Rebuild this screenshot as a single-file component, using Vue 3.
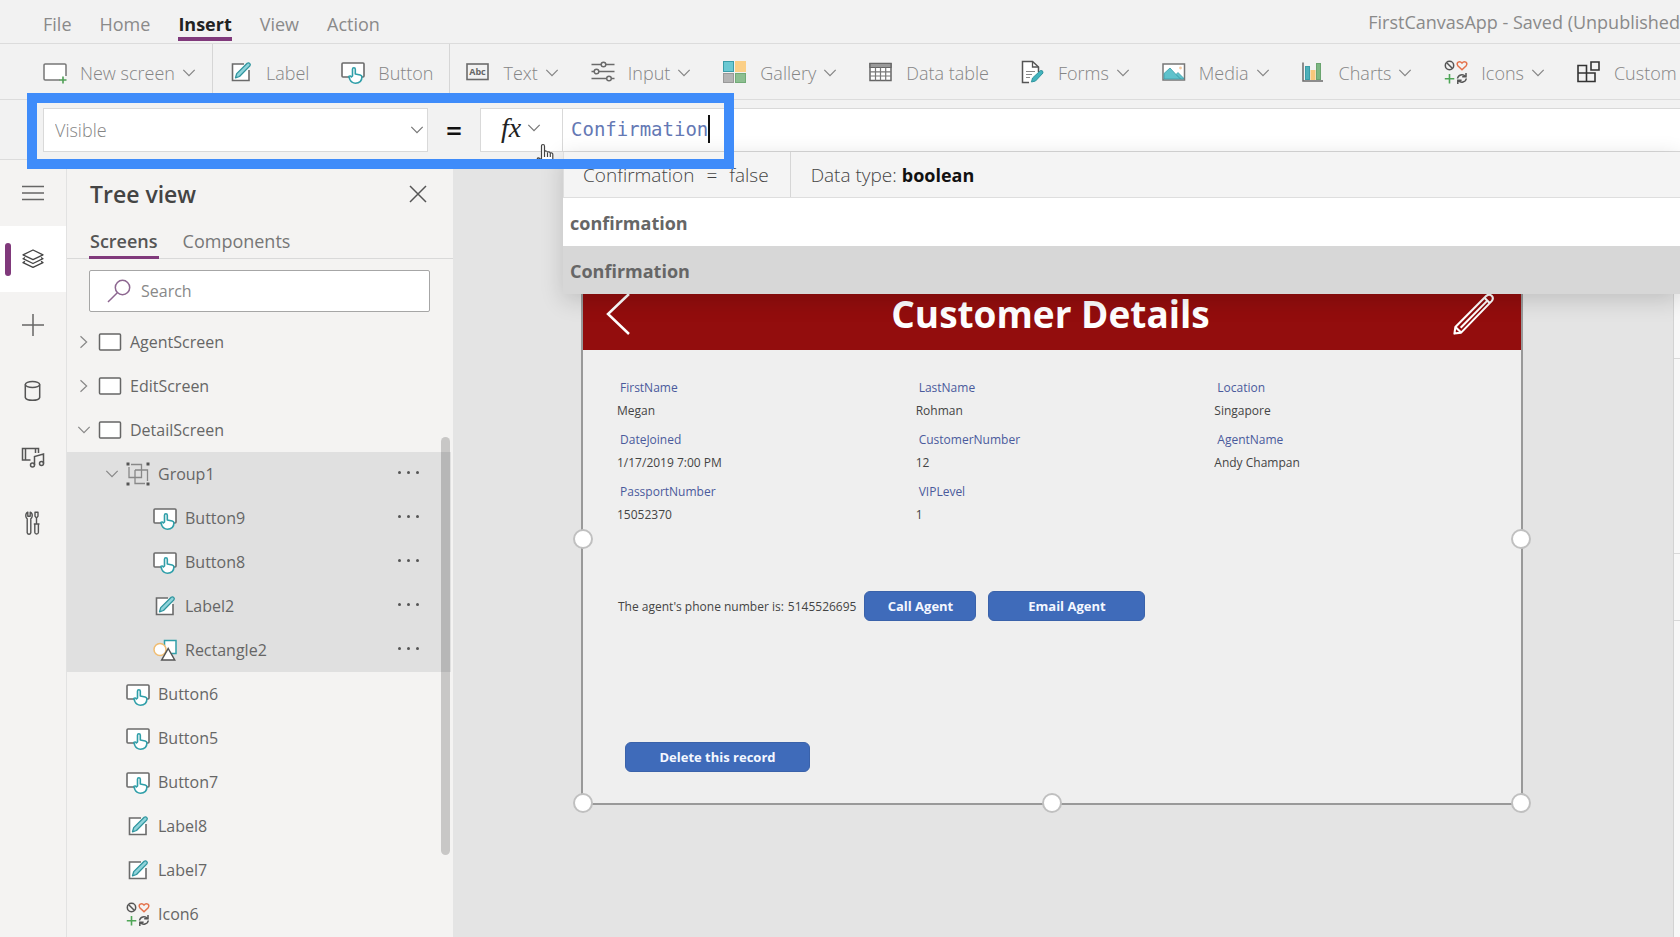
<script setup>
import { ref } from 'vue'

const menus = ['File', 'Home', 'Insert', 'View', 'Action']
const activeMenu = ref('Insert')

const tools = [
  { icon: 'newscreen', label: 'New screen', menu: true, divider: true },
  { icon: 'label', label: 'Label' },
  { icon: 'button', label: 'Button', divider: true },
  { icon: 'text', label: 'Text', menu: true },
  { icon: 'input', label: 'Input', menu: true },
  { icon: 'gallery', label: 'Gallery', menu: true },
  { icon: 'table', label: 'Data table' },
  { icon: 'forms', label: 'Forms', menu: true },
  { icon: 'media', label: 'Media', menu: true },
  { icon: 'charts', label: 'Charts', menu: true },
  { icon: 'icons', label: 'Icons', menu: true },
  { icon: 'custom', label: 'Custom' }
]

const rail = [
  { icon: 'hamburger', label: 'Menu' },
  { icon: 'layers', label: 'Tree view', active: true },
  { icon: 'plus', label: 'Insert' },
  { icon: 'data', label: 'Data' },
  { icon: 'medialib', label: 'Media' },
  { icon: 'toolset', label: 'Advanced tools' }
]

const tree = [
  { name: 'AgentScreen', icon: 'screen', level: 0, arrow: 'right' },
  { name: 'EditScreen', icon: 'screen', level: 0, arrow: 'right' },
  { name: 'DetailScreen', icon: 'screen', level: 0, arrow: 'down' },
  { name: 'Group1', icon: 'group', level: 1, arrow: 'down', selected: true },
  { name: 'Button9', icon: 'button', level: 2, selected: true },
  { name: 'Button8', icon: 'button', level: 2, selected: true },
  { name: 'Label2', icon: 'label', level: 2, selected: true },
  { name: 'Rectangle2', icon: 'shapes', level: 2, selected: true },
  { name: 'Button6', icon: 'button', level: 1 },
  { name: 'Button5', icon: 'button', level: 1 },
  { name: 'Button7', icon: 'button', level: 1 },
  { name: 'Label8', icon: 'label', level: 1 },
  { name: 'Label7', icon: 'label', level: 1 },
  { name: 'Icon6', icon: 'icons', level: 1 }
]

const fields = [
  ['FirstName', 'Megan'],
  ['LastName', 'Rohman'],
  ['Location', 'Singapore'],
  ['DateJoined', '1/17/2019 7:00 PM'],
  ['CustomerNumber', '12'],
  ['AgentName', 'Andy Champan'],
  ['PassportNumber', '15052370'],
  ['VIPLevel', '1']
]

const property = ref('Visible')
const formula = ref('Confirmation')
const search = ref('')
</script>

<template>
  <div class="studio">
    <svg class="sprite" aria-hidden="true">
      <symbol id="i-newscreen" viewBox="0 0 24 24">
        <path d="M17 20H2.2A1.2 1.2 0 0 1 1 18.800V5.200A1.200 1.200 0 0 1 2.200 4h19.600A1.200 1.200 0 0 1 23 5.200V16" fill="#fff" stroke="#777" stroke-width="1.500" />
        <path d="M20 16.500v7M16.500 20h7" stroke="#4f9f55" stroke-width="1.600" />
      </symbol>
      <symbol id="i-screen" viewBox="0 0 24 24">
        <rect x="1.500" y="4" width="21" height="16" rx="1" fill="#fff" stroke="#666" stroke-width="1.500" />
      </symbol>
      <symbol id="i-label" viewBox="0 0 24 24">
        <path d="M15 4H3.500v16.500H20V10" fill="#fff" stroke="#6b6b6b" stroke-width="1.600" />
        <path d="M6.500 17.800l1.200-4.200L18.200 3.200q1.400-.9 2.500.2t.2 2.500L10.500 16.500z" fill="#8fd3da" stroke="#2f959e" stroke-width="1.300" stroke-linejoin="round" />
      </symbol>
      <symbol id="i-button" viewBox="0 0 24 24">
        <rect x="1" y="3" width="22" height="14" rx="1" fill="#fff" stroke="#6b6b6b" stroke-width="1.600" />
        <path d="M11.500 16V9.200q0-1.500 1.400-1.500t1.400 1.500V14l4.900 1q1.700.4 1.700 2-.1 6.200-6.500 6.200-4 0-5.600-3.900l-1-2.900q1.700-1 2.600.6z" fill="#fff" stroke="#2f9fa9" stroke-width="1.600" stroke-linejoin="round" />
      </symbol>
      <symbol id="i-text" viewBox="0 0 24 24">
        <rect x="1" y="4" width="21" height="15.500" fill="none" stroke="#6b6b6b" stroke-width="1.600" />
        <text x="11.500" y="14.800" text-anchor="middle" font-size="9" font-weight="700" fill="#666" font-family="Open Sans, sans-serif">Abc</text>
      </symbol>
      <symbol id="i-input" viewBox="0 0 24 24">
        <g fill="#f2f2f2" stroke="#6b6b6b" stroke-width="1.500">
          <path d="M0.500 4.500h23M0.500 11.500h23M0.500 18.500h23" />
          <circle cx="12.500" cy="4.500" r="2.300" /><circle cx="5.500" cy="11.500" r="2.300" /><circle cx="18" cy="18.500" r="2.300" />
        </g>
      </symbol>
      <symbol id="i-gallery" viewBox="0 0 24 24">
        <rect x="0.500" y="1.500" width="10" height="10" fill="#6ac8d2" stroke="#3a9da8" />
        <rect x="12" y="1" width="11" height="11" fill="#fbcf86" />
        <rect x="0.500" y="13.500" width="10" height="9" fill="#b4b4b4" stroke="#999" />
        <rect x="12.500" y="13.500" width="10" height="9" fill="#8dbf91" stroke="#72ab77" />
      </symbol>
      <symbol id="i-table" viewBox="0 0 24 24">
        <path d="M1 3.500h21v17H1z" fill="#fff" stroke="#666" stroke-width="1.500" />
        <path d="M1 3.500h21v4H1z" fill="#999" stroke="#666" stroke-width="1.200" />
        <path d="M1 11.800h21M1 16h21M6.500 7.500v13M11.500 7.500v13M16.700 7.500v13" stroke="#777" stroke-width="1.200" />
      </symbol>
      <symbol id="i-forms" viewBox="0 0 24 24">
        <path d="M8 22.500H1.500v-21h10l6 5.500v5" fill="#fff" stroke="#555" stroke-width="1.500" />
        <path d="M11.500 1.500V7h6" fill="none" stroke="#555" stroke-width="1.300" />
        <path d="M5 11.500h9M5 14.500h6M5 17.500h4" stroke="#888" stroke-width="1.200" />
        <path d="M10.500 22l1-4L19.500 10.500q2.800-.5 2.500 2.500L14.500 21z" fill="#43b3bd" stroke="#2f959e" stroke-linejoin="round" />
      </symbol>
      <symbol id="i-media" viewBox="0 0 24 24">
        <rect x="1" y="4" width="21.500" height="16" fill="#fff" stroke="#777" stroke-width="1.500" />
        <path d="M2 19v-5.500L8 8l6 6.500 2-2 5.500 5.500v1z" fill="#5fc2cc" stroke="#3a9da8" stroke-width=".8" />
        <path d="M14 14.500l4.500 4.500" stroke="#3a9da8" /><circle cx="18.500" cy="8" r="1.400" fill="#f5c9a0" />
      </symbol>
      <symbol id="i-charts" viewBox="0 0 24 24">
        <rect x="3.500" y="6.500" width="4" height="13" fill="#4eb0ba" stroke="#3a9da8" /><rect x="8.500" y="10" width="5" height="10" fill="#f8c77a" /><rect x="14.500" y="3.500" width="4" height="16" fill="#7db782" stroke="#6aa46f" />
        <path d="M1 2.500v18.500h20" fill="none" stroke="#6b6b6b" stroke-width="1.500" />
      </symbol>
      <symbol id="i-icons" viewBox="0 0 24 24">
        <g fill="none" stroke="#555" stroke-width="1.500">
          <circle cx="5.500" cy="5.500" r="4.200" /><path d="M2.500 2.500l6 6" />
          <path d="M13.500 18.500a4.400 4.400 0 0 1 7.800-2M22.300 18.500a4.400 4.400 0 0 1-7.800 2M22 13v3.800h-3.800M13.800 24v-3.800h3.800" />
        </g>
        <path d="M18 9.800L13.800 5.700q-1.400-2.300.4-3.600 2.200-1.100 3.800 1 1.600-2.100 3.800-1 1.800 1.300.4 3.600z" fill="none" stroke="#e4734c" stroke-width="1.500" />
        <path d="M5.500 14v9.500M.8 18.700h9.500" stroke="#4fa657" stroke-width="1.600" />
      </symbol>
      <symbol id="i-custom" viewBox="0 0 24 24">
        <path d="M1 5.500h8.500V13H18v8.500H1zM1 13h8.500v8.500M14 2h8v8h-8z" fill="none" stroke="#333" stroke-width="1.600" />
      </symbol>
      <symbol id="i-group" viewBox="0 0 24 24">
        <g fill="none" stroke="#888" stroke-width="1.300">
          <path d="M5 2.500h10.500v13H3V5M9 8h12.500v11M19 21.500H9V8" />
        </g>
        <path d="M.5.500h3v3h-3zM20.500.500h3v3h-3zM.5 20.500h3v3h-3zM20.500 20.500h3v3h-3z" fill="#555" />
      </symbol>
      <symbol id="i-shapes" viewBox="0 0 24 24">
        <rect x="11.500" y="2.500" width="11.500" height="13" fill="#fff" stroke="#2f9fa9" stroke-width="1.500" />
        <circle cx="7" cy="11.500" r="6" fill="#fff" stroke="#f0bd72" stroke-width="1.500" />
        <path d="M15.200 10.500l6.500 11.500h-13z" fill="#fff" stroke="#555" stroke-width="1.500" />
      </symbol>
      <symbol id="i-hamburger" viewBox="0 0 24 24"><path d="M1 5.500h22M1 12h22M1 18.500h22" stroke="#666" stroke-width="1.500" /></symbol>
      <symbol id="i-layers" viewBox="0 0 24 24">
        <g fill="none" stroke="#444" stroke-width="1.300" stroke-linejoin="round">
          <path d="M12 3l10 4.800-10 4.800L2 7.800z" /><path d="M4 10.500L2 11.700l10 4.800 10-4.800-2-1.200" /><path d="M4 14.400l-2 1.200 10 4.800 10-4.800-2-1.200" />
        </g>
      </symbol>
      <symbol id="i-plus" viewBox="0 0 24 24"><path d="M12 1v22M1 12h22" stroke="#666" stroke-width="1.500" /></symbol>
      <symbol id="i-data" viewBox="0 0 24 24">
        <g fill="none" stroke="#555" stroke-width="1.500"><ellipse cx="11.500" cy="5.500" rx="7.200" ry="3" /><path d="M4.300 5.500v13q.8 2.800 7.200 2.800t7.200-2.800v-13" /></g>
      </symbol>
      <symbol id="i-medialib" viewBox="0 0 24 24">
        <g fill="none" stroke="#555" stroke-width="1.500">
          <path d="M9.500 15H1.500V3.500h16V8M4.500 4v11M14.500 4v4" /><path d="M13.500 20V11.500l9-2.500v9.500" />
          <ellipse cx="11.500" cy="20" rx="2" ry="2" /><ellipse cx="20.500" cy="18.500" rx="2" ry="2" />
        </g>
      </symbol>
      <symbol id="i-toolset" viewBox="0 0 24 24">
        <g fill="none" stroke="#555" stroke-width="1.400" stroke-linejoin="round">
          <path d="M6.800 1.200v4h2.400v-4q2.500 1.300 2 4Q11 7 9.800 7.800v14q-.4 1.400-1.800 1.400t-1.800-1.400v-14Q5 7 4.800 5.200q-.3-2.700 2-4z" />
          <path d="M14 1.200h3v4l-1.500 2-1.500-2zM15.500 7v6M12.800 13h5.700M13.800 13v8.500q.2 1.500 1.800 1.500t1.800-1.500V13" />
        </g>
      </symbol>
      <symbol id="i-down" viewBox="0 0 16 16"><path d="M1.500 4.500L8 11l6.500-6.500" fill="none" stroke="currentColor" stroke-width="1.400" /></symbol>
      <symbol id="i-right" viewBox="0 0 16 16"><path d="M4 1.500L11 8l-7 6.500" fill="none" stroke="currentColor" stroke-width="1.400" /></symbol>
    </svg>

    <header class="menubar">
      <nav class="menus">
        <button v-for="m in menus" :key="m" class="menu" :class="{ on: m === activeMenu }" @click="activeMenu = m">{{ m }}</button>
      </nav>
      <div class="doc">FirstCanvasApp - Saved (Unpublished</div>
    </header>

    <div class="toolbar">
      <button v-for="t in tools" :key="t.label" class="tool" :class="{ divided: t.divider }">
        <svg class="icon"><use :href="'#i-' + t.icon" /></svg>
        <span class="tool-label">{{ t.label }}</span>
        <svg v-if="t.menu" class="chev"><use href="#i-down" /></svg>
      </button>
    </div>

    <div class="formula">
      <div class="prop">
        <select v-model="property" class="prop-select" aria-label="Property">
          <option>Visible</option>
        </select>
        <svg class="chev prop-chev"><use href="#i-down" /></svg>
      </div>
      <span class="equals">=</span>
      <button class="fx" aria-label="Formula"><span class="fx-sign">fx</span><svg class="chev"><use href="#i-down" /></svg></button>
      <div class="entry">
        <input v-model="formula" class="entry-input" aria-label="Formula text" spellcheck="false" />
        <span class="caret"></span>
      </div>
      <div class="assist">
        <div class="result">
          <div class="result-value"><span>Confirmation</span><span>=</span><span>false</span></div>
          <div class="result-type">Data type: <b>boolean</b></div>
        </div>
        <button class="hint">confirmation</button>
        <button class="hint current">Confirmation</button>
      </div>
      <svg class="pointer" viewBox="0 0 18 28">
        <path d="M5.500 17V3.200Q5.500 1.500 7 1.500t1.500 1.700V9q.3-1.200 1.600-1t1.400 1.600q.4-1 1.500-.8t1.300 1.600q.6-.8 1.600-.4t.9 1.600V19q-.2 6-6 6.500-4 0-5.800-3.500L1.500 17q-.6-1.800.8-2.100 1 0 3.200 2.100zM8.500 9v5M11.500 10v4M14.300 11v3" fill="#fff" stroke="#444" stroke-width="1.200" />
      </svg>
      <div class="spotlight"></div>
    </div>

    <main class="body">
      <nav class="rail">
        <button v-for="r in rail" :key="r.label" class="rail-item" :class="{ active: r.active }" :aria-label="r.label">
          <svg class="icon"><use :href="'#i-' + r.icon" /></svg>
        </button>
      </nav>

      <aside class="panel">
        <div class="panel-head">
          <h2 class="panel-title">Tree view</h2>
          <button class="close" aria-label="Close">
            <svg class="close-icon" viewBox="0 0 18 18"><path d="M1 1l16 16M17 1L1 17" stroke="#555" stroke-width="1.500" /></svg>
          </button>
        </div>
        <div class="tabs">
          <button class="tab on">Screens</button>
          <button class="tab">Components</button>
        </div>
        <label class="search">
          <svg class="search-icon" viewBox="0 0 24 24"><circle cx="15.500" cy="8.500" r="7.200" fill="none" stroke="#8d6690" stroke-width="1.500" /><path d="M10.300 13.700L1 23" stroke="#8d6690" stroke-width="1.500" /></svg>
          <input v-model="search" class="search-input" placeholder="Search" aria-label="Search" />
        </label>
        <ul class="tree">
          <li v-for="n in tree" :key="n.name" class="node" :class="['level-' + n.level, { selected: n.selected }]">
            <svg v-if="n.arrow" class="arrow"><use :href="'#i-' + n.arrow" /></svg>
            <span v-else class="arrow"></span>
            <svg class="icon"><use :href="'#i-' + n.icon" /></svg>
            <span class="node-name">{{ n.name }}</span>
            <button v-if="n.selected" class="more" aria-label="More"><i></i><i></i><i></i></button>
          </li>
        </ul>
        <div class="thumb"></div>
      </aside>

      <section class="stage">
        <div class="artboard">
          <div class="app-head">
            <svg class="back" viewBox="0 0 24 42"><path d="M23 1L2 21l21 20" fill="none" stroke="#fff" stroke-width="2.500" /></svg>
            <h1 class="app-title">Customer Details</h1>
            <svg class="edit" viewBox="0 0 44 44"><path d="M1.500 42.500l1-7L35 3q3-2.500 5.500 0t0 5.500L8.500 41.500zM2.500 35.500l6 6M8 36.500L36 8M33 5l6 6" fill="none" stroke="#fff" stroke-width="2.200" stroke-linejoin="round" /></svg>
          </div>
          <dl class="fields">
            <div v-for="f in fields" :key="f[0]" class="field"><dt>{{ f[0] }}</dt><dd>{{ f[1] }}</dd></div>
          </dl>
          <div class="agent">
            <span>The agent's phone number is:</span>
            <span class="phone">5145526695</span>
            <button class="app-btn call">Call Agent</button>
            <button class="app-btn email">Email Agent</button>
          </div>
          <button class="app-btn delete">Delete this record</button>
          <span class="handle w"></span><span class="handle e"></span><span class="handle sw"></span><span class="handle s"></span><span class="handle se"></span>
        </div>
      </section>

      <aside class="props"><div class="props-a"></div><div class="props-b"></div><div class="props-c"></div></aside>
    </main>
  </div>
</template>

<style>
body { overflow: hidden; }
</style>

<style scoped>
.studio { display: flex; flex-direction: column; height: 100vh; overflow: hidden; background: #f2f2f2; color: #666; font-family: "Open Sans", "Noto Sans", sans-serif; font-size: 17px; }
.studio * { box-sizing: border-box; }
button, input, select { font: inherit; color: inherit; border: 0; padding: 0; margin: 0; background: none; outline: 0; }
.sprite { display: none; }
.icon { width: 24px; height: 24px; flex: none; overflow: visible; }
.chev { width: 14px; height: 14px; flex: none; }

.menubar { display: flex; justify-content: space-between; flex: none; height: 44px; padding-left: 43px; border-bottom: 1px solid #dcdcdc; overflow: hidden; }
.menus { display: flex; align-items: flex-start; gap: 28px; }
.menu { padding: 12px 0 1px; color: #8a8a8a; font-size: 18px; line-height: 24px; border-bottom: 4px solid transparent; }
.menu.on { color: #222; font-weight: 700; border-bottom-color: #80397b; }
.doc { color: #8a8a8a; font-size: 18px; line-height: 44px; white-space: nowrap; }

.toolbar { display: flex; flex: none; height: 56px; padding-left: 27px; border-bottom: 1px solid #dcdcdc; overflow: hidden; }
.tool { display: flex; flex: none; align-items: center; padding: 0 16px; color: #858585; font-size: 18px; font-weight: 300; white-space: nowrap; }
.tool.divided { border-right: 1px solid #d6d6d6; }
.tool-label { padding: 2px 0 0 13px; }
.tool .chev { margin: 2px 0 0 7px; }

.formula { position: relative; z-index: 2; display: flex; flex: none; align-items: center; height: 60px; padding: 0 0 0 43px; border-bottom: 1px solid #dcdcdc; }
.prop { position: relative; width: 385px; height: 44px; }
.prop-select { width: 100%; height: 100%; padding-left: 11px; appearance: none; background: #fff; border: 1px solid #d9d9d9; color: #858585; font-size: 18px; font-weight: 300; }
.prop-chev { position: absolute; right: 4px; top: 15px; color: #777; }
.equals { width: 52px; color: #111; font-size: 28px; font-weight: 600; text-align: center; }
.fx { display: flex; align-items: center; gap: 6px; width: 83px; height: 44px; padding: 0 0 3px 20px; background: #fff; border: 1px solid #d9d9d9; color: #777; }
.fx-sign { color: #222; font: italic 28px/30px "Liberation Serif", serif; }
.entry { display: flex; flex: 1; align-items: center; height: 44px; padding: 0 0 2px 8px; background: #fff; border: solid #d9d9d9; border-width: 1px 0; }
.entry-input { width: 12ch; color: #6478b4; font: 19px/24px "DejaVu Sans Mono", "Liberation Mono", monospace; }
.caret { width: 2px; height: 28px; background: #111; }
.assist { position: absolute; left: 563px; right: 0; top: 52px; box-shadow: 0 6px 22px rgba(0, 0, 0, .16); }
.result { display: flex; height: 46px; background: #f4f4f4; border: solid #dedede; border-width: 0 0 1px 1px; color: #444; font-size: 19px; font-weight: 300; line-height: 47px; }
.result-value { display: flex; gap: 12px; padding: 0 21px 0 19px; border-right: 1px solid #d6d6d6; }
.result-type { padding-left: 20px; }
.result-type b { color: #111; font-size: 18px; font-weight: 700; }
.hint { display: block; width: 100%; height: 48px; padding: 2px 0 0 7px; background: #fff; color: #666; font-weight: 700; font-size: 18px; text-align: left; }
.hint.current { background: #d7d7d7; }
.pointer { position: absolute; left: 536px; top: 43px; width: 18px; height: 28px; }
.spotlight { position: absolute; left: 27px; top: -7px; width: 707px; height: 76px; border: 10px solid #3f8cfa; pointer-events: none; }

.body { display: flex; flex: 1; min-height: 0; }
.rail { flex: none; width: 67px; background: #f4f3f2; border-right: 1px solid #e2e2e2; }
.rail-item { position: relative; display: grid; place-items: center; width: 66px; height: 66px; }
.rail-item.active { background: #fff; }
.rail-item.active::before { content: ""; position: absolute; left: 5px; top: 17px; width: 6px; height: 33px; border-radius: 3px; background: #80397b; }

.panel { position: relative; flex: none; width: 386px; background: #f4f3f2; }
.panel-head { display: flex; align-items: center; justify-content: space-between; height: 67px; padding: 0 26px 0 23px; }
.panel-title { margin: 0; color: #444; font-size: 23px; font-weight: 600; }
.close { display: grid; }
.close-icon { width: 18px; height: 18px; }
.tabs { display: flex; gap: 23px; height: 32px; padding-left: 22px; border-bottom: 1px solid #d9d9d9; }
.tab { height: 32px; padding: 2px 1px 3px; font-size: 18px; line-height: 24px; color: #777; border-bottom: 3px solid transparent; }
.tab.on { color: #555; font-weight: 600; border-bottom-color: #80397b; }
.search { display: flex; align-items: center; gap: 10px; height: 42px; margin: 11px 23px 8px 22px; padding-left: 17px; background: #fff; border: 1px solid #a6a6a6; border-radius: 2px; }
.search-icon { width: 24px; height: 24px; }
.search-input { flex: 1; font-size: 16px; }
.search-input::placeholder { color: #888; opacity: 1; }
.tree { margin: 0; padding: 0; list-style: none; }
.node { display: flex; align-items: center; height: 44px; margin-right: 2px; color: #666; font-size: 16px; }
.node.selected { background: #e0e0e0; }
.level-0 { padding-left: 9px; }
.level-1 { padding-left: 37px; }
.level-2 { padding-left: 64px; }
.arrow { width: 14px; height: 14px; margin: 0 7px 0 1px; color: #888; }
.node-name { padding-left: 8px; }
.more { display: flex; gap: 6px; margin-left: auto; padding: 0 32px 4px 0; }
.more i { width: 3px; height: 3px; border-radius: 50%; background: #555; }
.thumb { position: absolute; right: 3px; top: 277px; width: 9px; height: 418px; border-radius: 5px; background: rgba(0, 0, 0, .18); }

.stage { flex: 1; min-width: 0; padding: 115px 150px 0 128px; background: #e4e4e4; }
.artboard { position: relative; display: flex; flex-direction: column; align-items: stretch; aspect-ratio: 16 / 9; background: #efefef; border: 2px solid #999; border-top: 0; color: #444; font-size: 12px; }
.app-head { display: grid; grid-template-columns: 1fr auto 1fr; align-items: center; height: 75px; padding: 2px 26px 0 23px; background: #930d0d; }
.back { width: 24px; height: 42px; }
.edit { justify-self: end; width: 42px; height: 42px; }
.app-title { margin: 0; color: #fff; font-size: 37px; font-weight: 700; line-height: 50px; }
.fields { display: grid; grid-template-columns: repeat(3, 1fr); row-gap: 4px; margin: 29px 8px 0 34px; }
.field { height: 48px; line-height: 18px; }
.field dt { padding-left: 3px; color: #4a5a9c; }
.field dd { margin: 5px 0 0; }
.agent { display: flex; align-items: center; margin: 60px 0 0 35px; }
.phone { margin: 0 8px 0 4px; }
.app-btn { height: 30px; border-radius: 6px; background: #3f6bba; border: 1px solid #3a62aa; color: #f4f7ff; font-size: 13px; font-weight: 700; }
.call { width: 112px; }
.email { width: 157px; margin-left: 12px; }
.delete { width: 185px; margin: 121px 0 0 42px; }
.handle { position: absolute; width: 20px; height: 20px; margin: -10px; border: 2px solid #c0c0c0; border-radius: 50%; background: #fff; }
.w { left: 0; top: 50%; }
.e { left: 100%; top: 50%; }
.sw { left: 0; top: 100%; }
.s { left: 50%; top: 100%; }
.se { left: 100%; top: 100%; }
.props { flex: none; width: 7px; background: #f8f8f8; border-left: 1px solid #d2d2d2; }
.props div { border-bottom: 1px solid #d9d9d9; }
.props-a { height: 199px; }
.props-b { height: 195px; }
.props-c { height: 67px; }
</style>
